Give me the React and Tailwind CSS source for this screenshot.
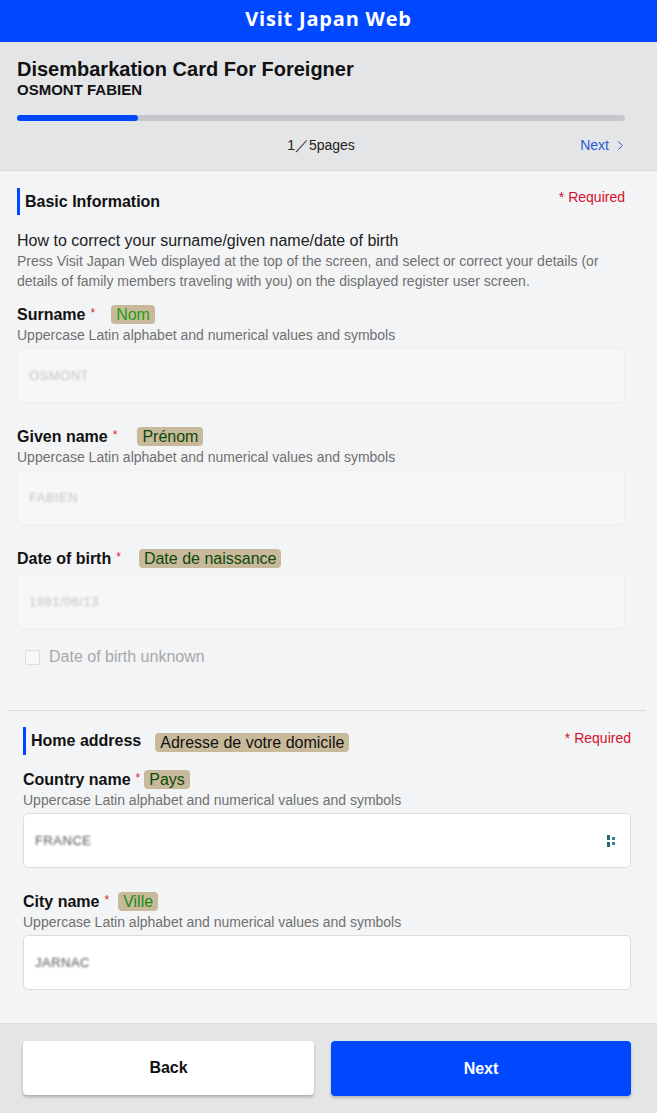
import React from 'react';
import { ChevronRight } from 'lucide-react';

const font = { fontFamily: '"Liberation Sans", Arial, sans-serif' };

function Badge({ text, className = '' }) {
  return (
    <span className={`inline-block rounded-[4px] bg-[#c9b99b] px-[5px] text-[16px] leading-[19px] text-[#0b4a0b] ${className}`}>
      {text}
    </span>
  );
}

function Label({ title, badge, gap, badgeClass }) {
  return (
    <div className="flex items-center h-[20px]">
      <span className="text-[16px] font-bold text-[#111]">{title}</span>
      <span className="ml-[5px] text-[12px] text-[#d9252b] relative -top-[2px]">*</span>
      <span className={gap}>
        <Badge text={badge} className={badgeClass} />
      </span>
    </div>
  );
}

function Hint() {
  return (
    <div className="text-[14px] leading-[20px] text-[#707070]">
      Uppercase Latin alphabet and numerical values and symbols
    </div>
  );
}

function Field({ value, white, icon, valueClass }) {
  return (
    <div
      className={`mt-[3px] h-[55px] rounded-[5px] border flex items-center justify-between px-[11px] ${
        white ? 'bg-white border-[#dcdcdc]' : 'bg-[#f6f7f9] border-[#eceef0]'
      }`}
    >
      <span className={`text-[13px] tracking-[0.5px] blur-[1.3px] ${valueClass}`}>{value}</span>
      {icon && (
        <svg width="12" height="14" viewBox="0 0 12 14" className="mr-[1px]">
          <rect x="1" y="1" width="3" height="5" fill="#1f6b78" />
          <rect x="1" y="8" width="3" height="5" fill="#1f6b78" />
          <rect x="6" y="3" width="3" height="3" fill="#2f8794" />
          <rect x="6" y="8" width="3" height="3" fill="#2f8794" />
        </svg>
      )}
    </div>
  );
}

export default function App() {
  return (
    <div style={font} className="w-[657px] min-h-[1113px] bg-[#f3f4f6] flex flex-col">
      <header
        style={{ fontFamily: '"Open Sans", "Noto Sans", sans-serif' }}
        className="h-[42px] pb-[4px] bg-[#0048ff] flex items-center justify-center text-white text-[20px] font-bold tracking-[0.8px]"
      >
        Visit Japan Web
      </header>

      <div className="bg-[#e4e5e7] px-[17px] pt-[16px] h-[129px] border-b border-[#d8d9dc]">
        <div className="pr-[15px]">
          <h1 className="text-[20px] leading-[23px] font-bold text-[#111]">Disembarkation Card For Foreigner</h1>
          <div className="text-[15px] leading-[18px] font-bold text-[#111]">OSMONT FABIEN</div>
          <div className="mt-[16px] h-[6px] rounded-full bg-[#c5c6c9]">
            <div className="h-full w-[121px] rounded-full bg-[#0048ff]" />
          </div>
          <div className="relative mt-[14px] h-[20px] flex items-center justify-center">
            <span className="text-[14px] text-[#222]">1／5pages</span>
            <span className="absolute right-0 top-0 h-[20px] flex items-center text-[14px] text-[#2b5bd6]">
              Next
              <ChevronRight size={15} strokeWidth={1.6} className="ml-[4px] -mr-[3px]" />
            </span>
          </div>
        </div>
      </div>

      <section className="pl-[17px] pr-[32px] pt-[17px]">
        <div className="flex items-center justify-between h-[27px]">
          <div className="flex items-center h-full">
            <span className="w-[3px] h-full bg-[#0048ff]" />
            <span className="ml-[5px] text-[16px] font-bold text-[#111]">Basic Information</span>
          </div>
          <span className="mb-[8px] text-[14px] text-[#d6102a]">* Required</span>
        </div>

        <div className="mt-[16px] text-[16px] leading-[20px] text-[#222]">
          How to correct your surname/given name/date of birth
        </div>
        <p className="text-[14px] leading-[20px] text-[#707070]">
          Press Visit Japan Web displayed at the top of the screen, and select or correct your details (or details of family members traveling with you) on the displayed register user screen.
        </p>

        <div className="mt-[14px]">
          <Label title="Surname" badge="Nom" gap="ml-[16px]" badgeClass="text-[#1aa01a]" />
          <Hint />
          <Field value="OSMONT" valueClass="text-[#c4c4c4]" />
        </div>

        <div className="mt-[24px]">
          <Label title="Given name" badge="Prénom" gap="ml-[20px]" />
          <Hint />
          <Field value="FABIEN" valueClass="text-[#c4c4c4]" />
        </div>

        <div className="mt-[24px]">
          <Label title="Date of birth" badge="Date de naissance" gap="ml-[18px]" />
          <div className="mt-[5px]">
            <Field value="1981/06/13" valueClass="text-[#c4c4c4]" />
          </div>
        </div>

        <label className="mt-[18px] flex items-center h-[20px] pl-[8px]">
          <span className="w-[15px] h-[15px] rounded-[2px] border border-[#dddddd] bg-[#f6f7f9]" />
          <span className="ml-[9px] text-[16px] text-[#a8a8a8]">Date of birth unknown</span>
        </label>
      </section>

      <div className="mt-[43px] ml-[7px] mr-[11px] h-px bg-[#d9dadd]" />

      <section className="pl-[23px] pr-[26px] pt-[16px] pb-[33px]">
        <div className="flex items-center justify-between h-[28px]">
          <div className="flex items-center h-full">
            <span className="w-[3px] h-full bg-[#0048ff]" />
            <span className="ml-[5px] text-[16px] font-bold text-[#111]">Home address</span>
            <Badge text="Adresse de votre domicile" className="ml-[14px] text-[#111] mt-[2px]" />
          </div>
          <span className="mb-[6px] text-[14px] text-[#d6102a]">* Required</span>
        </div>

        <div className="mt-[15px]">
          <Label title="Country name" badge="Pays" gap="ml-[4px]" />
          <Hint />
          <Field value="FRANCE" white icon valueClass="text-[#555]" />
        </div>

        <div className="mt-[24px]">
          <Label title="City name" badge="Ville" gap="ml-[9px]" badgeClass="text-[#1a8a1a]" />
          <Hint />
          <Field value="JARNAC" white valueClass="text-[#555]" />
        </div>
      </section>

      <footer className="flex-1 bg-[#e4e5e7] border-t border-[#dcdde0] pl-[23px] pt-[17px] pb-[18px] flex gap-[17px]">
        <button className="w-[291px] h-[54px] bg-white rounded-[4px] shadow-[0_2px_3px_rgba(0,0,0,0.25)] text-[16px] font-bold text-[#111]">
          Back
        </button>
        <button className="w-[300px] h-[55px] bg-[#0048ff] rounded-[4px] shadow-[0_2px_3px_rgba(0,0,0,0.2)] text-[16px] font-bold text-white">
          Next
        </button>
      </footer>
    </div>
  );
}
